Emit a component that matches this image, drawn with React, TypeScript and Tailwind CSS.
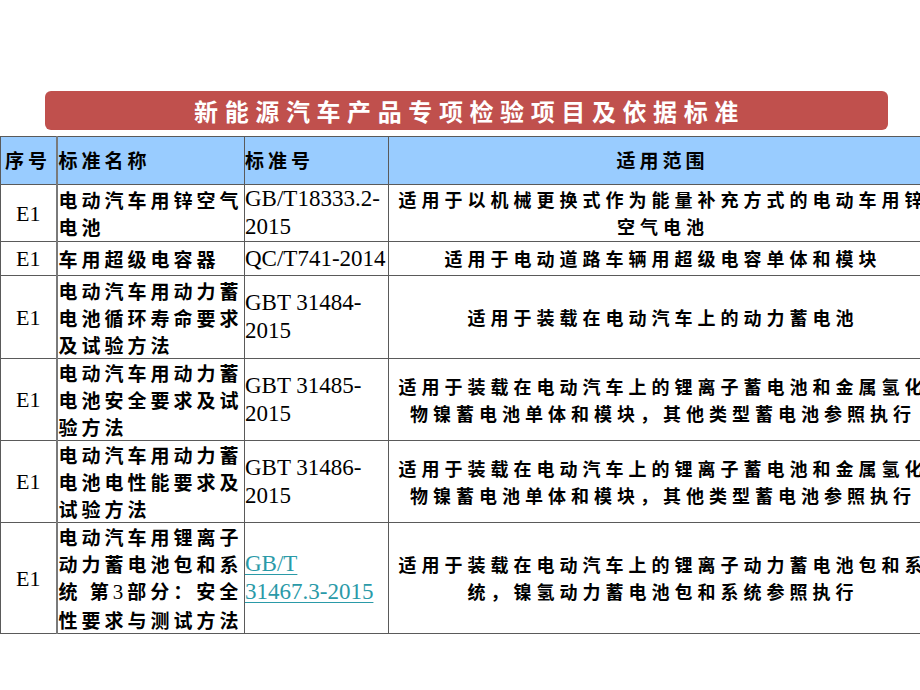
import React from "react";

type Row = {
  h: string;
  name: React.ReactNode[];
  code: string[];
  link?: boolean;
  scope: string[];
};

const rows: Row[] = [
  {
    h: "h-[54px]",
    name: ["电动汽车用锌空气", "电池"],
    code: ["GB/T18333.2-", "2015"],
    scope: ["适用于以机械更换式作为能量补充方式的电动车用锌", "空气电池"],
  },
  {
    h: "h-[32px]",
    name: ["车用超级电容器"],
    code: ["QC/T741-2014"],
    scope: ["适用于电动道路车辆用超级电容单体和模块"],
  },
  {
    h: "h-[83px]",
    name: ["电动汽车用动力蓄", "电池循环寿命要求", "及试验方法"],
    code: ["GBT 31484-", "2015"],
    scope: ["适用于装载在电动汽车上的动力蓄电池"],
  },
  {
    h: "h-[82px]",
    name: ["电动汽车用动力蓄", "电池安全要求及试", "验方法"],
    code: ["GBT 31485-", "2015"],
    scope: [
      "适用于装载在电动汽车上的锂离子蓄电池和金属氢化",
      "物镍蓄电池单体和模块，其他类型蓄电池参照执行",
    ],
  },
  {
    h: "h-[82px]",
    name: ["电动汽车用动力蓄", "电池电性能要求及", "试验方法"],
    code: ["GBT 31486-", "2015"],
    scope: [
      "适用于装载在电动汽车上的锂离子蓄电池和金属氢化",
      "物镍蓄电池单体和模块，其他类型蓄电池参照执行",
    ],
  },
  {
    h: "h-[110px]",
    name: [
      "电动汽车用锂离子",
      "动力蓄电池包和系",
      <>
        统 第<span className="font-['Liberation_Serif',serif] font-normal tracking-normal text-[21px] mr-[4px]">3</span>部分：安全
      </>,
      "性要求与测试方法",
    ],
    code: ["GB/T", "31467.3-2015"],
    link: true,
    scope: [
      "适用于装载在电动汽车上的锂离子动力蓄电池包和系",
      "统，镍氢动力蓄电池包和系统参照执行",
    ],
  },
];

const cjk = "font-['Noto_Sans_CJK_SC',sans-serif]";

export default function App() {
  return (
    <div className="w-[920px] h-[690px] overflow-hidden bg-white">
      <div className="pt-[91px] pl-[45px]">
        <div className="w-[843px] h-[39px] rounded-[6px] bg-[#c0504d] flex items-center justify-center">
          <span
            className={`${cjk} text-white font-bold text-[24px] tracking-[6.6px] pl-[6px] leading-none`}
          >
            新能源汽车产品专项检验项目及依据标准
          </span>
        </div>
      </div>
      <div className="mt-[6px] w-[940px]">
        <table className="table-fixed border-collapse w-[932px]">
          <colgroup>
            <col className="w-[56px]" />
            <col className="w-[188px]" />
            <col className="w-[144px]" />
            <col className="w-[544px]" />
          </colgroup>
          <thead>
            <tr className="h-[48px] bg-[#99ccff]">
              <th
                className={`${cjk} border border-[#5a5a5a] border-r-2 border-r-[#7a7a7a] text-left font-bold text-[19px] tracking-[4px] pl-[4px] text-black whitespace-nowrap align-middle`}
              >
                序号
              </th>
              <th
                className={`${cjk} border border-[#5a5a5a] text-left font-bold text-[19px] tracking-[4px] pl-[1px] text-black whitespace-nowrap align-middle`}
              >
                标准名称
              </th>
              <th
                className={`${cjk} border border-[#5a5a5a] border-l-[#111] text-left font-bold text-[19px] tracking-[4px] pl-0 text-black whitespace-nowrap align-middle`}
              >
                标准号
              </th>
              <th
                className={`${cjk} border border-[#5a5a5a] text-center font-bold text-[19px] tracking-[4px] pl-[4px] text-black whitespace-nowrap align-middle`}
              >
                适用范围
              </th>
            </tr>
          </thead>
          <tbody>
            {rows.map((r, i) => (
              <tr key={i} className={r.h}>
                <td className="border border-[#5a5a5a] border-r-2 border-r-[#7a7a7a] text-center align-middle font-['Liberation_Serif',serif] text-[22px] text-black p-0">
                  E1
                </td>
                <td className="border border-[#5a5a5a] align-middle p-0 pl-[1px]">
                  <div
                    className={`${cjk} flex flex-col font-bold text-[19px] tracking-[4px] leading-[27px] text-black whitespace-nowrap`}
                  >
                    {r.name.map((n, j) => (
                      <span key={j}>{n}</span>
                    ))}
                  </div>
                </td>
                <td className="border border-[#5a5a5a] border-l-[#111] align-middle p-0">
                  <div
                    className={`flex flex-col items-start font-['Liberation_Serif',serif] text-[23px] leading-[28px] whitespace-pre ${
                      r.link ? "text-[#2a9aa8]" : "text-black"
                    }`}
                  >
                    {r.code.map((c, j) => (
                      <span
                        key={j}
                        className={r.link ? "underline decoration-1 underline-offset-[3px]" : ""}
                      >
                        {c}
                      </span>
                    ))}
                  </div>
                </td>
                <td className="border border-[#5a5a5a] align-middle p-0">
                  <div
                    className={`${cjk} flex flex-col items-center font-bold text-[18px] tracking-[5px] pl-[5px] leading-[27px] text-black whitespace-nowrap`}
                  >
                    {r.scope.map((s, j) => (
                      <span key={j}>{s}</span>
                    ))}
                  </div>
                </td>
              </tr>
            ))}
          </tbody>
        </table>
      </div>
    </div>
  );
}
